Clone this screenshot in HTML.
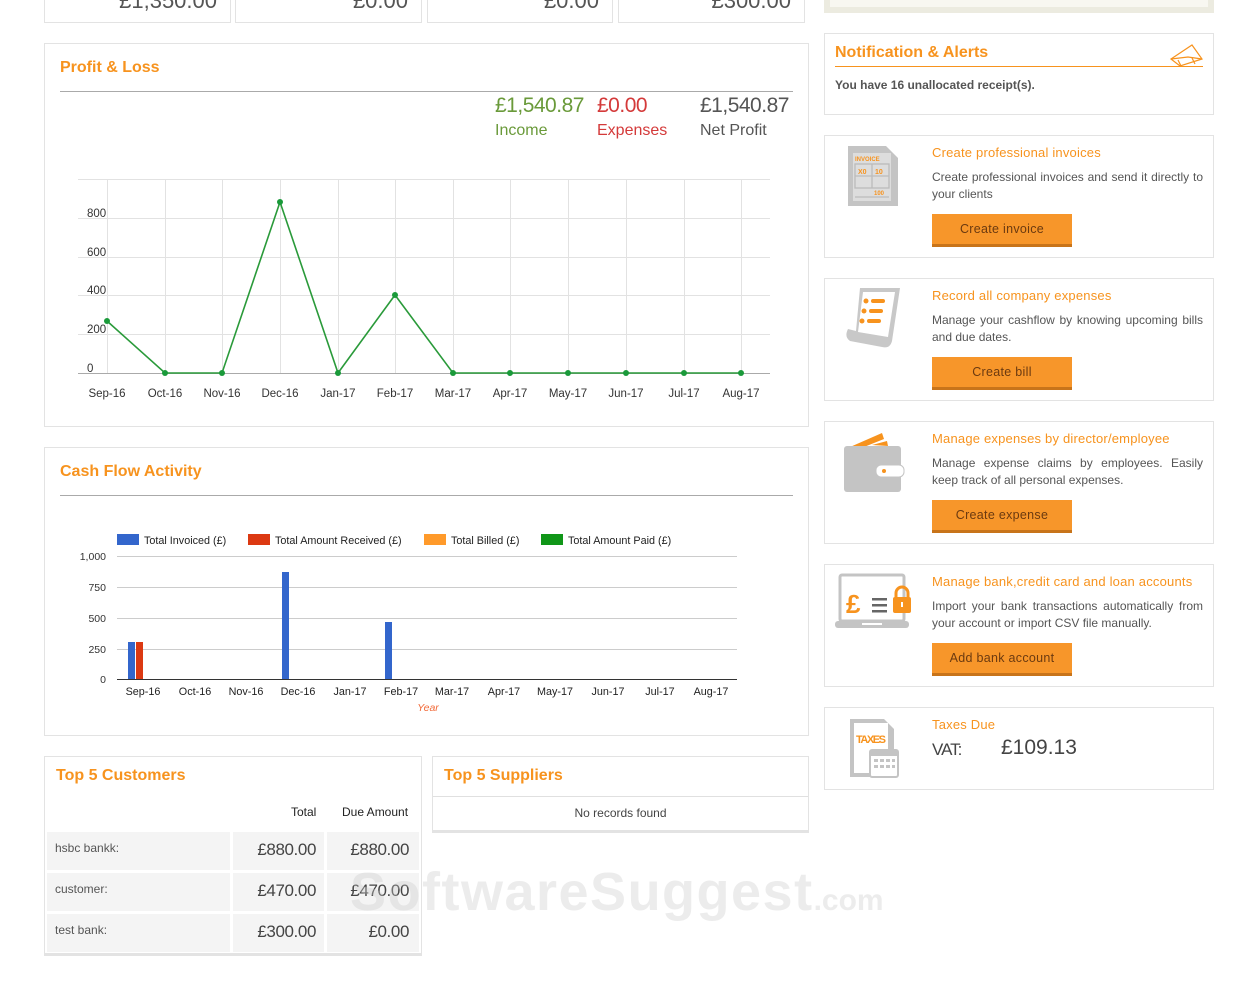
<!DOCTYPE html>
<html><head><meta charset="utf-8"><style>
*{box-sizing:border-box;margin:0;padding:0}
body{width:1243px;height:990px;background:#fff;font-family:"Liberation Sans",Arial,sans-serif;position:relative;overflow:hidden;color:#444}
.a{position:absolute}
.box{position:absolute;border:1px solid #e3e3e3;background:#fff}
.h{font-weight:bold;font-size:16px;color:#f7931e}
.ct{font-size:13px;color:#f7931e;letter-spacing:.2px}
.cd{font-size:12px;color:#555;line-height:17px;text-align:justify}
.btn{position:absolute;width:140px;height:33px;background:#f7962a;border-bottom:3px solid #c8741a;color:#6b3a10;font-size:12.5px;text-align:center;line-height:30px;letter-spacing:.3px}
svg text{font-family:"Liberation Sans",Arial,sans-serif}
</style></head><body>

<div class="box" style="left:44px;top:-5px;width:187px;height:28px;text-align:right;padding-right:13px;font-size:22px;line-height:10px;color:#555">£1,350.00</div>
<div class="box" style="left:235px;top:-5px;width:187px;height:28px;text-align:right;padding-right:13px;font-size:22px;line-height:10px;color:#555">£0.00</div>
<div class="box" style="left:427px;top:-5px;width:186px;height:28px;text-align:right;padding-right:13px;font-size:22px;line-height:10px;color:#555">£0.00</div>
<div class="box" style="left:618px;top:-5px;width:187px;height:28px;text-align:right;padding-right:13px;font-size:22px;line-height:10px;color:#555">£300.00</div>

<div class="a" style="left:824px;top:-5px;width:390px;height:18px;background:#ecebe0"></div>
<div class="a" style="left:830px;top:-5px;width:378px;height:12px;background:#f8f7f1"></div>

<div class="box" style="left:44px;top:43px;width:765px;height:384px"></div>
<div class="a h" style="left:60px;top:59px">Profit &amp; Loss</div>
<div class="a" style="left:60px;top:91px;width:733px;height:1px;background:#aaa"></div>
<div class="a" style="left:495px;top:94px;font-size:21px;color:#6a9a3a;letter-spacing:-.5px">£1,540.87</div>
<div class="a" style="left:495px;top:122px;font-size:16px;color:#6a9a3a">Income</div>
<div class="a" style="left:597px;top:94px;font-size:21px;color:#d43a3a;letter-spacing:-.5px">£0.00</div>
<div class="a" style="left:597px;top:122px;font-size:16px;color:#d43a3a">Expenses</div>
<div class="a" style="left:700px;top:94px;font-size:21px;color:#555;letter-spacing:-.5px">£1,540.87</div>
<div class="a" style="left:700px;top:122px;font-size:16px;color:#555">Net Profit</div>

<svg class="a" style="left:0;top:0" width="820" height="430">
<g stroke="#e2e2e2" stroke-width="1">
<line x1="78" y1="179.5" x2="770" y2="179.5"/><line x1="78" y1="218.5" x2="770" y2="218.5"/><line x1="78" y1="257.5" x2="770" y2="257.5"/><line x1="78" y1="295.5" x2="770" y2="295.5"/><line x1="78" y1="334.5" x2="770" y2="334.5"/>
<line x1="107.5" y1="179" x2="107.5" y2="373"/><line x1="165.5" y1="179" x2="165.5" y2="373"/><line x1="222.5" y1="179" x2="222.5" y2="373"/><line x1="280.5" y1="179" x2="280.5" y2="373"/><line x1="338.5" y1="179" x2="338.5" y2="373"/><line x1="395.5" y1="179" x2="395.5" y2="373"/><line x1="453.5" y1="179" x2="453.5" y2="373"/><line x1="510.5" y1="179" x2="510.5" y2="373"/><line x1="568.5" y1="179" x2="568.5" y2="373"/><line x1="626.5" y1="179" x2="626.5" y2="373"/><line x1="684.5" y1="179" x2="684.5" y2="373"/><line x1="741.5" y1="179" x2="741.5" y2="373"/>
</g>
<line x1="78" y1="373.5" x2="770" y2="373.5" stroke="#aaa"/>
<g font-size="11.5" fill="#333">
<text x="87" y="217">800</text><text x="87" y="256">600</text><text x="87" y="294">400</text><text x="87" y="333">200</text><text x="87" y="372">0</text>
</g>
<polyline fill="none" stroke="#2a9a3a" stroke-width="1.6" points="107,321 165,373 222,373 280,202 338,373 395,295 453,373 510,373 568,373 626,373 684,373 741,373"/>
<g fill="#1a9a3a"><circle cx="107" cy="321" r="3"/><circle cx="165" cy="373" r="3"/><circle cx="222" cy="373" r="3"/><circle cx="280" cy="202" r="3"/><circle cx="338" cy="373" r="3"/><circle cx="395" cy="295" r="3"/><circle cx="453" cy="373" r="3"/><circle cx="510" cy="373" r="3"/><circle cx="568" cy="373" r="3"/><circle cx="626" cy="373" r="3"/><circle cx="684" cy="373" r="3"/><circle cx="741" cy="373" r="3"/></g>
<g font-size="11.5" fill="#333" text-anchor="middle">
<text x="107" y="397">Sep-16</text><text x="165" y="397">Oct-16</text><text x="222" y="397">Nov-16</text><text x="280" y="397">Dec-16</text><text x="338" y="397">Jan-17</text><text x="395" y="397">Feb-17</text><text x="453" y="397">Mar-17</text><text x="510" y="397">Apr-17</text><text x="568" y="397">May-17</text><text x="626" y="397">Jun-17</text><text x="684" y="397">Jul-17</text><text x="741" y="397">Aug-17</text>
</g>
</svg>

<div class="box" style="left:44px;top:447px;width:765px;height:289px"></div>
<div class="a h" style="left:60px;top:463px">Cash Flow Activity</div>
<div class="a" style="left:60px;top:495px;width:733px;height:1px;background:#aaa"></div>
<svg class="a" style="left:0;top:500px" width="820" height="230">
<g font-size="10.8" fill="#222">
<rect x="117" y="34" width="22" height="11" fill="#3366cc"/><text x="144" y="44">Total Invoiced (£)</text>
<rect x="248" y="34" width="22" height="11" fill="#dc3912"/><text x="275" y="44">Total Amount Received (£)</text>
<rect x="424" y="34" width="22" height="11" fill="#ff9a2a"/><text x="451" y="44">Total Billed (£)</text>
<rect x="541" y="34" width="22" height="11" fill="#109618"/><text x="568" y="44">Total Amount Paid (£)</text>
</g>
<g stroke="#ccc"><line x1="117" y1="56.5" x2="737" y2="56.5"/><line x1="117" y1="87.5" x2="737" y2="87.5"/><line x1="117" y1="118.5" x2="737" y2="118.5"/><line x1="117" y1="149.5" x2="737" y2="149.5"/></g>
<g font-size="10.5" fill="#333" text-anchor="end"><text x="106" y="60">1,000</text><text x="106" y="91">750</text><text x="106" y="122">500</text><text x="106" y="153">250</text><text x="106" y="183">0</text></g>
<rect x="128" y="142" width="7" height="37" fill="#3366cc"/><rect x="136" y="142" width="7" height="37" fill="#dc3912"/>
<rect x="282" y="72" width="7" height="107" fill="#3366cc"/><rect x="385" y="122" width="7" height="57" fill="#3366cc"/>
<line x1="117" y1="179.5" x2="737" y2="179.5" stroke="#333"/>
<g font-size="10.8" fill="#222" text-anchor="middle">
<text x="143" y="195">Sep-16</text><text x="195" y="195">Oct-16</text><text x="246" y="195">Nov-16</text><text x="298" y="195">Dec-16</text><text x="350" y="195">Jan-17</text><text x="401" y="195">Feb-17</text><text x="452" y="195">Mar-17</text><text x="504" y="195">Apr-17</text><text x="555" y="195">May-17</text><text x="608" y="195">Jun-17</text><text x="660" y="195">Jul-17</text><text x="711" y="195">Aug-17</text>
</g>
<text x="428" y="211" font-size="10.5" fill="#f26b3a" font-style="italic" text-anchor="middle">Year</text>
</svg>

<div class="box" style="left:44px;top:756px;width:378px;height:200px;border-bottom:3px solid #e3e3e3"></div>
<div class="a h" style="left:56px;top:767px">Top 5 Customers</div>
<div class="a" style="left:291px;top:805px;font-size:12px;color:#222">Total</div>
<div class="a" style="left:342px;top:805px;font-size:12px;color:#222">Due Amount</div>
<div class="a" style="left:47px;top:832px;width:183px;height:38px;background:#f4f4f4"></div>
<div class="a" style="left:233px;top:832px;width:91px;height:38px;background:#f4f4f4"></div>
<div class="a" style="left:327px;top:832px;width:92px;height:38px;background:#f4f4f4"></div>
<div class="a" style="left:47px;top:873px;width:183px;height:38px;background:#f4f4f4"></div>
<div class="a" style="left:233px;top:873px;width:91px;height:38px;background:#f4f4f4"></div>
<div class="a" style="left:327px;top:873px;width:92px;height:38px;background:#f4f4f4"></div>
<div class="a" style="left:47px;top:914px;width:183px;height:38px;background:#f4f4f4"></div>
<div class="a" style="left:233px;top:914px;width:91px;height:38px;background:#f4f4f4"></div>
<div class="a" style="left:327px;top:914px;width:92px;height:38px;background:#f4f4f4"></div>
<div class="a" style="left:55px;top:841px;font-size:12px;color:#555">hsbc bankk:</div>
<div class="a" style="left:55px;top:882px;font-size:12px;color:#555">customer:</div>
<div class="a" style="left:55px;top:923px;font-size:12px;color:#555">test bank:</div>
<div class="a" style="left:233px;top:840px;width:83px;text-align:right;font-size:17px;color:#444;letter-spacing:-.4px">£880.00</div>
<div class="a" style="left:327px;top:840px;width:82px;text-align:right;font-size:17px;color:#444;letter-spacing:-.4px">£880.00</div>
<div class="a" style="left:233px;top:881px;width:83px;text-align:right;font-size:17px;color:#444;letter-spacing:-.4px">£470.00</div>
<div class="a" style="left:327px;top:881px;width:82px;text-align:right;font-size:17px;color:#444;letter-spacing:-.4px">£470.00</div>
<div class="a" style="left:233px;top:922px;width:83px;text-align:right;font-size:17px;color:#444;letter-spacing:-.4px">£300.00</div>
<div class="a" style="left:327px;top:922px;width:82px;text-align:right;font-size:17px;color:#444;letter-spacing:-.4px">£0.00</div>

<div class="box" style="left:432px;top:756px;width:377px;height:77px;border-bottom:3px solid #e3e3e3"></div>
<div class="a h" style="left:444px;top:767px">Top 5 Suppliers</div>
<div class="a" style="left:433px;top:796px;width:375px;height:1px;background:#e0e0e0"></div>
<div class="a" style="left:432px;top:806px;width:377px;text-align:center;font-size:12px;color:#444">No records found</div>

<div class="a" style="left:350px;top:862px;font-size:54px;line-height:60px;font-weight:bold;color:rgba(200,200,200,.35);letter-spacing:1.5px;white-space:nowrap">SoftwareSuggest<span style="font-size:30px;letter-spacing:0">.com</span></div>

<div class="box" style="left:824px;top:33px;width:390px;height:82px"></div>
<div class="a h" style="left:835px;top:44px">Notification &amp; Alerts</div>
<div class="a" style="left:835px;top:66px;width:368px;height:1px;background:#f7931e"></div>
<svg class="a" style="left:1168px;top:43px" width="36" height="24"><g fill="none" stroke="#f7931e" stroke-width="1.2"><path d="M3 16 L24 2 L34 16 L12 23 Z"/><path d="M3 16 L20 14 L34 16"/><path d="M10 17 L13 23 M24 15 L27 21"/></g></svg>
<div class="a" style="left:835px;top:78px;font-size:12px;font-weight:bold;color:#555">You have 16 unallocated receipt(s).</div>

<div class="box" style="left:824px;top:135px;width:390px;height:123px"></div>
<svg class="a" style="left:846px;top:145px" width="54" height="62"><path d="M2 1 H40 L52 13 V61 H2 Z" fill="#c4c4c4"/><rect x="7" y="8" width="38" height="48" fill="#ddd"/><text x="9" y="16" font-size="6" font-weight="bold" fill="#f7931e">INVOICE</text><g fill="none" stroke="#bbb" stroke-width="1.3"><rect x="9" y="19" width="34" height="24"/><line x1="26" y1="19" x2="26" y2="43"/><line x1="9" y1="31" x2="43" y2="31"/><line x1="9" y1="52" x2="43" y2="52"/></g><text x="12" y="29" font-size="7" font-weight="bold" fill="#f7931e">X0</text><text x="29" y="29" font-size="7" font-weight="bold" fill="#f7931e">10</text><text x="28" y="50" font-size="6" font-weight="bold" fill="#f7931e">100</text></svg>
<div class="a ct" style="left:932px;top:145px">Create professional invoices</div>
<div class="a cd" style="left:932px;top:169px;width:271px">Create professional invoices and send it directly to your clients</div>
<div class="btn" style="left:932px;top:214px">Create invoice</div>

<div class="box" style="left:824px;top:278px;width:390px;height:123px"></div>
<svg class="a" style="left:842px;top:285px" width="62" height="66"><path d="M18 3 H58 L50 56 Q48 64 40 62 L8 56 Q2 52 6 44 L14 46 Z" fill="#c8c8c8"/><path d="M21 7 H53 L46 52 L16 47 Z" fill="#fff"/><g fill="#f7931e"><circle cx="24" cy="16" r="2.5"/><rect x="29" y="14" width="14" height="4" rx="2"/><circle cx="22" cy="26" r="2.5"/><rect x="27" y="24" width="14" height="4" rx="2"/><circle cx="20" cy="36" r="2.5"/><rect x="25" y="34" width="14" height="4" rx="2"/></g></svg>
<div class="a ct" style="left:932px;top:288px">Record all company expenses</div>
<div class="a cd" style="left:932px;top:312px;width:271px">Manage your cashflow by knowing upcoming bills and due dates.</div>
<div class="btn" style="left:932px;top:357px">Create bill</div>

<div class="box" style="left:824px;top:421px;width:390px;height:123px"></div>
<svg class="a" style="left:842px;top:431px" width="64" height="62"><path d="M8 16 L40 2 L42 8 L12 20Z" fill="#f7931e"/><path d="M30 14 L45 10 L46 15 Z" fill="#f7931e"/><rect x="2" y="15" width="57" height="46" rx="3" fill="#c4c4c4"/><rect x="34" y="34" width="28" height="12" rx="5" fill="#fff" stroke="#c4c4c4"/><circle cx="42" cy="40" r="2" fill="#f7931e"/></svg>
<div class="a ct" style="left:932px;top:431px">Manage expenses by director/employee</div>
<div class="a cd" style="left:932px;top:455px;width:271px">Manage expense claims by employees. Easily keep track of all personal expenses.</div>
<div class="btn" style="left:932px;top:500px">Create expense</div>

<div class="box" style="left:824px;top:564px;width:390px;height:123px"></div>
<svg class="a" style="left:834px;top:573px" width="80" height="58"><rect x="6" y="2" width="64" height="46" rx="2" fill="none" stroke="#c4c4c4" stroke-width="3"/><rect x="1" y="48" width="74" height="7" rx="3" fill="#c4c4c4"/><rect x="28" y="50" width="20" height="2" fill="#fff"/><text x="12" y="40" font-size="26" font-weight="bold" fill="#f7931e">£</text><g fill="#666"><rect x="38" y="25" width="15" height="2.5"/><rect x="38" y="31" width="15" height="2.5"/><rect x="38" y="37" width="15" height="2.5"/></g><rect x="59" y="24" width="18" height="16" rx="2" fill="#f7931e"/><path d="M62 24 V20 A6 6 0 0 1 74 20 V24" fill="none" stroke="#f7931e" stroke-width="3"/><rect x="67" y="29" width="2" height="5" fill="#fff"/></svg>
<div class="a ct" style="left:932px;top:574px">Manage bank,credit card and loan accounts</div>
<div class="a cd" style="left:932px;top:598px;width:271px">Import your bank transactions automatically from your account or import CSV file manually.</div>
<div class="btn" style="left:932px;top:643px">Add bank account</div>

<div class="box" style="left:824px;top:707px;width:390px;height:83px"></div>
<svg class="a" style="left:848px;top:717px" width="52" height="62"><path d="M2 2 H36 L46 12 V60 H2 Z" fill="#c4c4c4"/><rect x="6" y="6" width="34" height="50" fill="#fff"/><text x="8" y="26" font-size="11" font-weight="bold" fill="#f7931e" textLength="30">TAXES</text><rect x="22" y="33" width="28" height="27" rx="2" fill="#fff" stroke="#c4c4c4" stroke-width="2"/><rect x="22" y="33" width="28" height="6" fill="#c4c4c4"/><g fill="#c4c4c4"><rect x="26" y="42" width="4" height="3"/><rect x="32" y="42" width="4" height="3"/><rect x="38" y="42" width="4" height="3"/><rect x="44" y="42" width="3" height="3"/><rect x="26" y="48" width="4" height="3"/><rect x="32" y="48" width="4" height="3"/><rect x="38" y="48" width="4" height="3"/><rect x="44" y="48" width="3" height="3"/></g></svg>
<div class="a ct" style="left:932px;top:717px">Taxes Due</div>
<div class="a" style="left:932px;top:740px;font-size:17px;color:#444;letter-spacing:-1px">VAT:</div>
<div class="a" style="left:1001px;top:736px;font-size:21px;color:#444">£109.13</div>

</body></html>
